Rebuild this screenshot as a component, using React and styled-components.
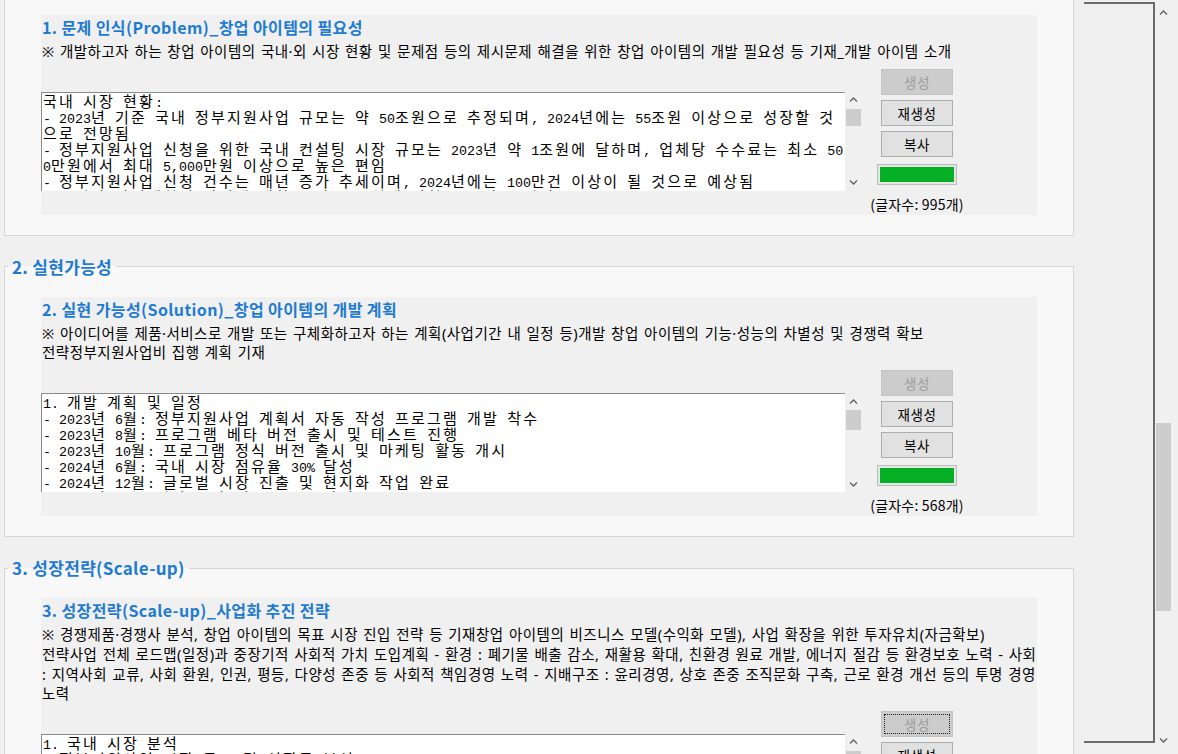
import React from "react";
import styled, { createGlobalStyle } from "styled-components";

const GlobalStyle = createGlobalStyle`
    html, body {
        margin: 0;
        padding: 0;
        background: #f0f0f0;
        overflow: hidden;
    }
    body {
        font-family: "Noto Sans CJK KR", "Noto Sans", sans-serif;
        color: #000;
    }
`;

const Window = styled.div`
    display: flex;
    width: 1178px;
    height: 754px;
    overflow: hidden;
    background: #f0f0f0;
`;

const Content = styled.div`
    flex: none;
    width: 1084px;
    box-sizing: border-box;
    padding-left: 4px;
    margin-top: -25px;
    display: flex;
    flex-direction: column;
    gap: 21px;
`;

const Section = styled.fieldset`
    margin: 0;
    padding: 0 0 20px 0;
    min-width: 0;
    width: 1070px;
    box-sizing: border-box;
    border: 1px solid #d6d6d6;
    background: #f8f8f8;
`;

const SectionLegend = styled.legend`
    margin-left: 3px;
    padding: 0 4px;
    font-weight: bold;
    font-size: 17px;
    line-height: 20px;
    letter-spacing: 0.3px;
    color: #1f7bd0;
`;

const Panel = styled.div`
    margin: 20px 0 0 36px;
    width: 996px;
    box-sizing: border-box;
    padding-bottom: 2px;
    background: #f0f0f0;
`;

const PanelTitle = styled.div`
    padding-left: 1px;
    font-weight: bold;
    font-size: 16px;
    line-height: 24px;
    letter-spacing: 0.4px;
    color: #1f7bd0;
`;

const Desc = styled.div`
    margin-top: 3px;
    padding-left: 1px;
    font-family: "Noto Sans", "Noto Sans CJK KR", sans-serif;
    font-size: 14.5px;
    line-height: 19.7px;
    letter-spacing: 0.5px;
    word-spacing: 1px;
    white-space: nowrap;
`;

const Body = styled.div`
    display: flex;
    align-items: flex-start;
    gap: 15px;
    margin-top: 7px;
`;

const TextBox = styled.div`
    display: flex;
    width: 821px;
    height: 99px;
    margin-top: 23px;
`;

const TextArea = styled.div`
    flex: 1;
    background: #fff;
    border-top: 1px solid #8a8a8a;
    border-left: 1px solid #8a8a8a;
    padding-left: 1px;
    font-family: "Noto Sans CJK KR", sans-serif;
    font-size: 15px;
    overflow: hidden;
`;

/* 굴림체 cells: hangul 16px wide, ascii 8px wide */
const TextLine = styled.div`
    height: 16px;
    line-height: 16px;
    letter-spacing: 2.2px;
    white-space: pre;
`;

const Half = styled.span`
    font-family: "Liberation Mono", monospace;
    font-size: 13.333px;
    line-height: 16px;
    letter-spacing: 0;
`;

const VScroll = styled.div`
    flex: none;
    width: 17px;
    display: flex;
    flex-direction: column;
    background: #f0f0f0;
`;

const Arrow = styled.div`
    flex: none;
    height: 17px;
    display: flex;
    align-items: center;
    justify-content: center;
`;

const Track = styled.div`
    flex: 1;
    display: flex;
    flex-direction: column;
`;

const Thumb = styled.div`
    margin: ${(p) => p.$top}px 1px 0;
    height: ${(p) => p.$h}px;
    background: #cdcdcd;
`;

const Side = styled.div`
    flex: none;
    width: 80px;
    display: flex;
    flex-direction: column;
    align-items: center;
`;

const Btn = styled.button`
    width: 72px;
    height: 26px;
    margin: ${(p) => p.$gap || 0}px 0 0;
    padding: 0;
    box-sizing: border-box;
    border: 1px solid ${(p) => (p.disabled ? "#c4c4c4" : "#adadad")};
    background: ${(p) => (p.disabled ? "#cccccc" : "#e1e1e1")};
    color: ${(p) => (p.disabled ? "#9d9d9d" : "#000")};
    font-family: "Noto Sans CJK KR", sans-serif;
    font-size: 13.5px;
    line-height: 24px;
    letter-spacing: 0.5px;
    outline: ${(p) => (p.$focus ? "1px dotted #222" : "none")};
    outline-offset: -4px;
`;

const Progress = styled.div`
    width: 80px;
    height: 21px;
    margin-top: 7px;
    box-sizing: border-box;
    border: 1px solid #bcbcbc;
    background: #e6e6e6;
    padding: 2px;
`;

const Fill = styled.div`
    height: 100%;
    background: #06b025;
`;

const Count = styled.div`
    margin-top: 10px;
    font-size: 14px;
    line-height: 18px;
    letter-spacing: 0.2px;
    white-space: nowrap;
`;

const Frame = styled.div`
    flex: none;
    width: 71px;
    height: 741px;
    margin-top: 2px;
    box-sizing: border-box;
    border: 2px solid #6b6b6b;
    border-left: none;
`;

const MainScroll = styled.div`
    flex: none;
    width: 17px;
    height: 754px;
    box-sizing: border-box;
    padding: 4px 0 6px;
    display: flex;
    flex-direction: column;
`;

function Chevron({ down }) {
    return (
        <svg width="9" height="6" viewBox="0 0 9 6">
            <polyline
                points={down ? "1,1.5 4.5,5 8,1.5" : "1,4.5 4.5,1 8,4.5"}
                fill="none"
                stroke="#606060"
                strokeWidth="1.3"
            />
        </svg>
    );
}

function GulimLine({ text }) {
    const parts = text.split(/([\x20-\x7E]+)/);
    return (
        <TextLine>
            {parts.map((p, i) => (i % 2 ? <Half key={i}>{p}</Half> : p))}
        </TextLine>
    );
}

const sections = [
    {
        legend: "1. 문제 인식(Problem)",
        title: "1. 문제 인식(Problem)_창업 아이템의 필요성",
        desc: [
            "※ 개발하고자 하는 창업 아이템의 국내·외 시장 현황 및 문제점 등의 제시문제 해결을 위한 창업 아이템의 개발 필요성 등 기재_개발 아이템 소개",
        ],
        text: [
            "국내 시장 현황:",
            "- 2023년 기준 국내 정부지원사업 규모는 약 50조원으로 추정되며, 2024년에는 55조원 이상으로 성장할 것",
            "으로 전망됨",
            "- 정부지원사업 신청을 위한 국내 컨설팅 시장 규모는 2023년 약 1조원에 달하며, 업체당 수수료는 최소 50",
            "0만원에서 최대 5,000만원 이상으로 높은 편임",
            "- 정부지원사업 신청 건수는 매년 증가 추세이며, 2024년에는 100만건 이상이 될 것으로 예상됨",
            "- 그러나 사업계획서 작성에 대한 부담으로 실제 신청률은 낮은 편임",
        ],
        thumb: 17,
        count: 995,
    },
    {
        legend: "2. 실현가능성",
        title: "2. 실현 가능성(Solution)_창업 아이템의 개발 계획",
        desc: [
            "※ 아이디어를 제품·서비스로 개발 또는 구체화하고자 하는 계획(사업기간 내 일정 등)개발 창업 아이템의 기능·성능의 차별성 및 경쟁력 확보",
            "전략정부지원사업비 집행 계획 기재",
        ],
        text: [
            "1. 개발 계획 및 일정",
            "- 2023년 6월: 정부지원사업 계획서 자동 작성 프로그램 개발 착수",
            "- 2023년 8월: 프로그램 베타 버전 출시 및 테스트 진행",
            "- 2023년 10월: 프로그램 정식 버전 출시 및 마케팅 활동 개시",
            "- 2024년 6월: 국내 시장 점유율 30% 달성",
            "- 2024년 12월: 글로벌 시장 진출 및 현지화 작업 완료",
            "- 2025년 6월: 해외 시장 점유율 10% 달성",
        ],
        thumb: 20,
        count: 568,
    },
    {
        legend: "3. 성장전략(Scale-up)",
        title: "3. 성장전략(Scale-up)_사업화 추진 전략",
        desc: [
            "※ 경쟁제품·경쟁사 분석, 창업 아이템의 목표 시장 진입 전략 등 기재창업 아이템의 비즈니스 모델(수익화 모델), 사업 확장을 위한 투자유치(자금확보)",
            "전략사업 전체 로드맵(일정)과 중장기적 사회적 가치 도입계획 - 환경 : 폐기물 배출 감소, 재활용 확대, 친환경 원료 개발, 에너지 절감 등 환경보호 노력 - 사회",
            ": 지역사회 교류, 사회 환원, 인권, 평등, 다양성 존중 등 사회적 책임경영 노력 - 지배구조 : 윤리경영, 상호 존중 조직문화 구축, 근로 환경 개선 등의 투명 경영",
            "노력",
        ],
        text: [
            "1. 국내 시장 분석",
            "- 정부지원사업 시장 규모 및 성장률 분석",
            "- 주요 경쟁사 현황 및 서비스 비교",
        ],
        thumb: 18,
        count: 742,
        focus: true,
    },
];

function AppSection({ s }) {
    return (
        <Section>
            <SectionLegend>{s.legend}</SectionLegend>
            <Panel>
                <PanelTitle>{s.title}</PanelTitle>
                <Desc>
                    {s.desc.map((line, i) => (
                        <div key={i}>{line}</div>
                    ))}
                </Desc>
                <Body>
                    <TextBox>
                        <TextArea>
                            {s.text.map((line, i) => (
                                <GulimLine key={i} text={line} />
                            ))}
                        </TextArea>
                        <VScroll>
                            <Arrow>
                                <Chevron />
                            </Arrow>
                            <Track>
                                <Thumb $top={0} $h={s.thumb} />
                            </Track>
                            <Arrow>
                                <Chevron down />
                            </Arrow>
                        </VScroll>
                    </TextBox>
                    <Side>
                        <Btn disabled $focus={s.focus}>
                            생성
                        </Btn>
                        <Btn $gap={5}>재생성</Btn>
                        <Btn $gap={5}>복사</Btn>
                        <Progress>
                            <Fill style={{ width: "100%" }} />
                        </Progress>
                        <Count>(글자수: {s.count}개)</Count>
                    </Side>
                </Body>
            </Panel>
        </Section>
    );
}

export default function App() {
    return (
        <Window>
            <GlobalStyle />
            <Content>
                {sections.map((s, i) => (
                    <AppSection key={i} s={s} />
                ))}
            </Content>
            <Frame />
            <MainScroll>
                <Arrow>
                    <Chevron />
                </Arrow>
                <Track>
                    <Thumb $top={402} $h={188} />
                </Track>
                <Arrow>
                    <Chevron down />
                </Arrow>
            </MainScroll>
        </Window>
    );
}
